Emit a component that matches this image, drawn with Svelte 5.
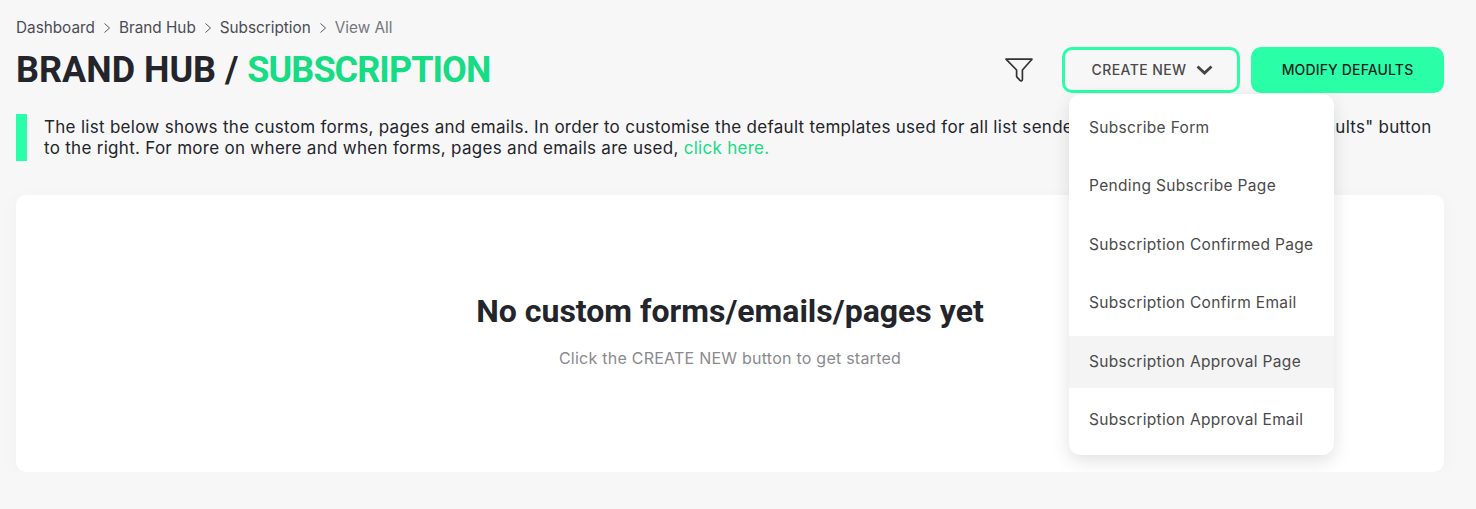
<script>
	const crumbs = ['Dashboard', 'Brand Hub', 'Subscription'];
	const menu = [
		'Subscribe Form',
		'Pending Subscribe Page',
		'Subscription Confirmed Page',
		'Subscription Confirm Email',
		'Subscription Approval Page',
		'Subscription Approval Email'
	];
</script>

<main class="page">
	<nav class="crumbs">
		{#each crumbs as crumb}
			<span>{crumb}</span>
			<svg class="sep" width="8" height="12" viewBox="0 0 8 12" fill="none"><path d="M1.5 1.5 6.5 6 1.5 10.5" stroke="#555" stroke-width="1" /></svg>
		{/each}
		<span class="last">View All</span>
	</nav>

	<header class="head">
		<h1>BRAND HUB / <em>SUBSCRIPTION</em></h1>
		<div class="actions">
			<svg class="filter" width="30" height="26" viewBox="0 0 30 26" fill="none">
				<path d="M2 2.2h26L18.4 13v9.6c0 1.4-1.6 1.6-2.4.8l-3-3.2c-.3-.4-.4-.8-.4-1.2V13z" stroke="#333" stroke-width="1.7" stroke-linejoin="round" />
			</svg>
			<div class="create-wrap">
				<button class="btn create">
					<span>CREATE NEW</span>
					<svg width="17" height="10" viewBox="0 0 17 10" fill="none"><path d="M1.5 1.5 8.5 8l7-6.5" stroke="#444" stroke-width="2.8" /></svg>
				</button>
				<ul class="menu">
					{#each menu as item, i}
						<li class:hover={i === 4}>{item}</li>
					{/each}
				</ul>
			</div>
			<button class="btn modify">MODIFY DEFAULTS</button>
		</div>
	</header>

	<p class="notice">
		The list below shows the custom forms, pages and emails. In order to customise the default templates used for all list senders, please use the "Modify Defaults" button<br />
		to the right. For more on where and when forms, pages and emails are used, <a href="#top">click here.</a>
	</p>

	<section class="card">
		<h2>No custom forms/emails/pages yet</h2>
		<p>Click the CREATE NEW button to get started</p>
	</section>
</main>

<style>
	:global(body) {
		margin: 0;
		background: #f7f7f8;
	}
	.page {
		padding: 18px 32px 0 16px;
		font-family: 'Inter', 'Open Sans', sans-serif;
		color: #23252b;
	}
	.crumbs {
		display: flex;
		align-items: center;
		gap: 8px;
		height: 19px;
		font-size: 15.3px;
		color: #4a4c55;
	}
	.crumbs .last {
		color: #74767c;
	}
	.head {
		display: flex;
		justify-content: space-between;
		align-items: center;
		margin-top: 10px;
		height: 46px;
	}
	h1 {
		margin: 0;
		font-family: 'Roboto', sans-serif;
		font-size: 36px;
		font-weight: 700;
		color: #23252b;
	}
	h1 em {
		font-style: normal;
		letter-spacing: -0.95px;
		color: #16dc84;
	}
	.actions {
		display: flex;
		align-items: center;
	}
	.filter {
		margin-right: 28px;
	}
	.create-wrap {
		position: relative;
		margin-right: 11px;
	}
	.btn {
		height: 46px;
		box-sizing: border-box;
		border-radius: 10px;
		font-family: inherit;
		font-size: 14px;
		font-weight: 500;
		padding: 0 0 2px;
		cursor: pointer;
	}
	.create {
		width: 178px;
		display: flex;
		align-items: center;
		justify-content: center;
		gap: 10px;
		padding-left: 3px;
		background: #f7f7f8;
		border: 3px solid #2affa8;
		color: #4a4a4a;
		letter-spacing: 0.4px;
	}
	.create svg {
		margin-top: 2px;
	}
	.modify {
		width: 193px;
		background: #2affa8;
		border: none;
		letter-spacing: 0.15px;
		color: #1c1f26;
	}
	.menu {
		position: absolute;
		z-index: 2;
		top: 47px;
		left: 7px;
		width: 265px;
		margin: 0;
		padding: 8px 0 9px;
		display: flex;
		flex-direction: column;
		gap: 6.4px;
		list-style: none;
		background: #fff;
		border-radius: 12px;
		box-shadow: 0 6px 18px rgba(0, 0, 0, 0.12);
		font-size: 15.5px;
		letter-spacing: 0.33px;
		color: #4a4a4a;
	}
	.menu li {
		height: 52px;
		line-height: 52px;
		padding-left: 20px;
	}
	.menu li.hover {
		background: #f4f4f4;
	}
	.notice {
		margin: 21px 0 0;
		padding-left: 17px;
		border-left: 11px solid #2affa8;
		font-size: 17px;
		letter-spacing: 0.29px;
		line-height: 21px;
		height: 47px;
		box-sizing: border-box;
		padding-top: 3px;
		white-space: nowrap;
		color: #23252b;
	}
	.notice a {
		color: #16dc84;
		text-decoration: none;
	}
	.card {
		margin-top: 34px;
		height: 277px;
		box-sizing: border-box;
		padding-top: 96px;
		background: #fff;
		border-radius: 10px;
		box-shadow: 0 4px 20px rgba(0, 0, 0, 0.03);
		text-align: center;
	}
	.card h2 {
		margin: 0;
		font-family: 'Roboto', sans-serif;
		font-size: 32px;
		line-height: 40px;
		font-weight: 700;
		color: #23252b;
	}
	.card p {
		margin: 17px 0 0;
		font-size: 16px;
		letter-spacing: 0.24px;
		color: #8a8a8e;
	}
</style>
